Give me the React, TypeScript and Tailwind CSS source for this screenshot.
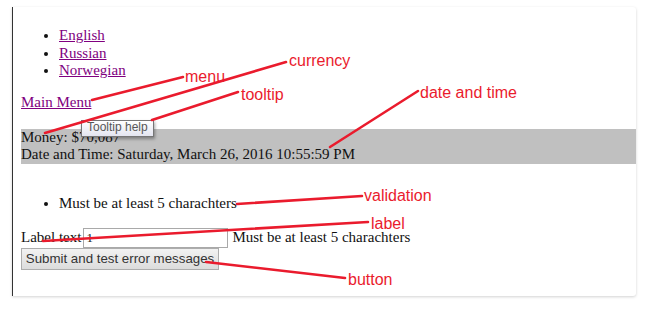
import React from "react";

const RED = "#ea1b2d";

function Annotations() {
  const lines: [number, number, number, number][] = [
    [92, 100, 183, 77],
    [45, 133, 286, 62],
    [152, 120, 238, 92],
    [330, 147, 418, 91],
    [237, 204, 362, 196],
    [43, 241, 368, 222],
    [206, 262, 345, 278],
  ];
  const labels: [string, number, number][] = [
    ["menu", 185, 82],
    ["currency", 289, 66],
    ["tooltip", 241, 100],
    ["date and time", 420, 98],
    ["validation", 364, 201],
    ["label", 371, 229],
    ["button", 348, 285],
  ];
  return (
    <svg
      className="absolute inset-0 pointer-events-none"
      width={647}
      height={309}
      viewBox="0 0 647 309"
    >
      {lines.map(([x1, y1, x2, y2], i) => (
        <line
          key={i}
          x1={x1}
          y1={y1}
          x2={x2}
          y2={y2}
          stroke={RED}
          strokeWidth={2.6}
          strokeLinecap="round"
        />
      ))}
      {labels.map(([t, x, y], i) => (
        <text
          key={i}
          x={x}
          y={y}
          fill={RED}
          fontSize={16}
          fontFamily="'Liberation Sans', Arial, sans-serif"
        >
          {t}
        </text>
      ))}
    </svg>
  );
}

export default function App() {
  return (
    <div className="relative w-[647px] h-[309px] bg-white overflow-hidden">
      <div className="absolute left-0 top-0">
        <div
          className="ml-[12px] mt-[7px] w-[624px] h-[289px] bg-white border-l border-l-[#333] rounded-br-[3px] rounded-tr-[3px] shadow-[0_1px_3px_rgba(0,0,0,0.18)] pt-[20px] pl-[8px] text-[15px] leading-[17.5px] text-[#111]"
          style={{ fontFamily: "'Liberation Serif', 'Times New Roman', serif" }}
        >
          <ul className="list-disc pl-[38px]">
            <li>
              <a className="text-[#800080] underline" href="#">English</a>
            </li>
            <li>
              <a className="text-[#800080] underline" href="#">Russian</a>
            </li>
            <li>
              <a className="text-[#800080] underline" href="#">Norwegian</a>
            </li>
          </ul>
          <div className="mt-[13px] leading-[18px]">
            <a className="text-[#800080] underline" href="#">Main Menu</a>
          </div>
          <div className="relative mt-[18px] bg-[#c0c0c0] leading-[17.5px]">
            <div>Money: $70,087</div>
            <div>Date and Time: Saturday, March 26, 2016 10:55:59 PM</div>
            <div
              className="absolute left-[60px] top-[-9px] h-[17px] px-[5px] flex items-center bg-gradient-to-b from-white to-[#e4e5f0] border border-[#767676] shadow-[1px_2px_3px_rgba(0,0,0,0.35)] text-[12px] text-[#575757]"
              style={{ fontFamily: "'Liberation Sans', Arial, sans-serif" }}
            >
              Tooltip help
            </div>
          </div>
          <ul className="list-disc pl-[38px] mt-[30px] leading-[18px]">
            <li>Must be at least 5 charachters</li>
          </ul>
          <div className="mt-[16px] flex items-center h-[20px]">
            <span>Label text</span>
            <input
              className="ml-[2px] w-[145px] h-[20px] border border-[#a9a9a9] bg-white px-[2px] text-[13px] text-[#222] outline-none"
              style={{ fontFamily: "'Liberation Serif', serif" }}
              defaultValue="1"
            />
            <span className="ml-[4px]">Must be at least 5 charachters</span>
          </div>
          <button
            className="w-[198px] h-[22px] border border-[#adadad] bg-gradient-to-b from-[#f2f2f2] to-[#dcdcdc] text-[13.3px] text-[#333] flex items-center justify-center"
            style={{ fontFamily: "'Liberation Sans', Arial, sans-serif" }}
          >
            Submit and test error messages
          </button>
        </div>
      </div>
      <Annotations />
    </div>
  );
}
